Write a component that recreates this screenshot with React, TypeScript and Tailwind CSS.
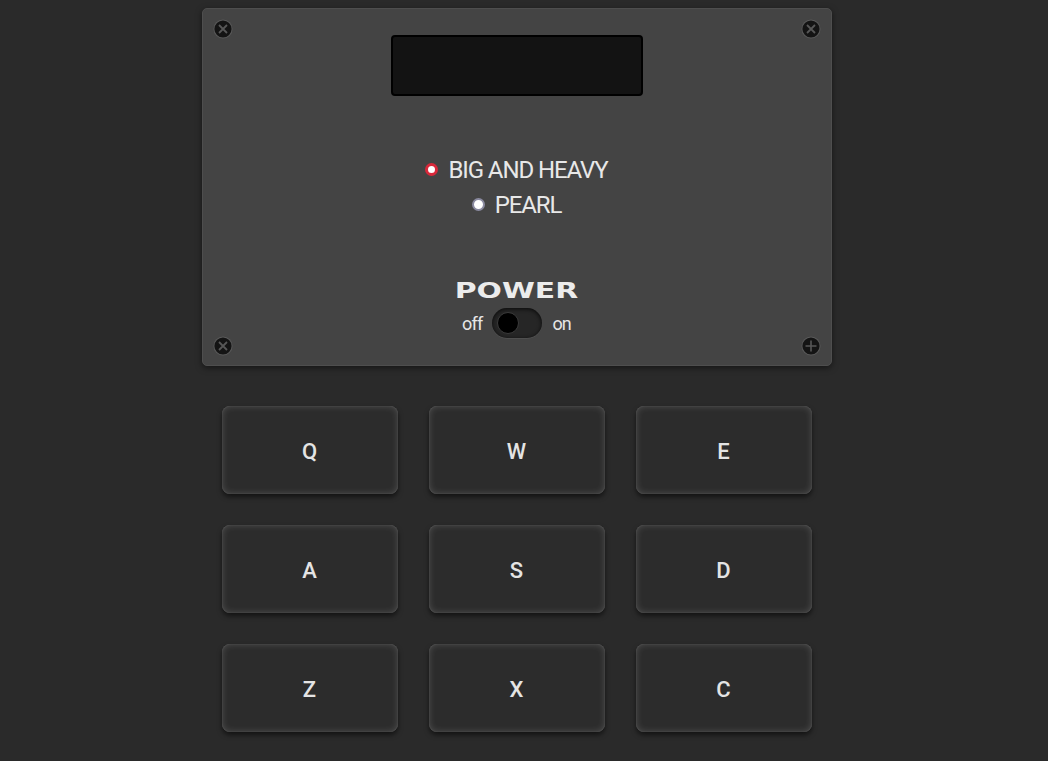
const keys = ["Q", "W", "E", "A", "S", "D", "Z", "X", "C"];

function Screw({ plus }: { plus?: boolean }) {
  return (
    <svg width="20" height="20" viewBox="0 0 20 20">
      <circle cx="10" cy="10" r="9.5" fill="#5a5a5a" />
      <circle cx="10" cy="10" r="8.6" fill="#141414" />
      {plus ? (
        <path d="M10 4.5V15.5M4.5 10H15.5" stroke="#575757" strokeWidth="1.6" />
      ) : (
        <path d="M6 6L14 14M14 6L6 14" stroke="#575757" strokeWidth="1.8" />
      )}
    </svg>
  );
}

function Radio({ label, active }: { label: string; active?: boolean }) {
  return (
    <div className="flex h-[35px] items-center justify-center gap-[10px]">
      {active ? (
        <span className="h-[13px] w-[13px] rounded-full border-[3px] border-[#d8283a] bg-white" />
      ) : (
        <span className="h-[13px] w-[13px] rounded-full border-2 border-[#8a8aa0] bg-white" />
      )}
      <span className="text-[24px] leading-none tracking-[-1.1px] text-[#e8e8e8]">{label}</span>
    </div>
  );
}

export default function App() {
  return (
    <div className="min-h-screen w-full bg-[#2a2a2a] font-['Roboto',sans-serif]">
      <div className="w-[1033px] pt-2">
        <div className="mx-auto flex w-[630px] flex-col items-center">
          <div className="relative flex h-[358px] w-[630px] flex-col items-center rounded-[5px] border border-[#4e4e4e] bg-[#444444] shadow-[0_2px_6px_rgba(0,0,0,0.5)]">
            <div className="absolute left-[10px] top-[10px]"><Screw /></div>
            <div className="absolute right-[10px] top-[10px]"><Screw /></div>
            <div className="absolute bottom-[9px] left-[10px]"><Screw /></div>
            <div className="absolute bottom-[9px] right-[10px]"><Screw plus /></div>

            <div className="mt-[26px] h-[61px] w-[252px] rounded-[4px] border-2 border-black bg-[#131313]" />

            <div className="mt-[56px] flex flex-col">
              <Radio label="BIG AND HEAVY" active />
              <Radio label="PEARL" />
            </div>

            <div className="mt-[59px] inline-block origin-center scale-x-[1.42] font-['DejaVu_Sans',sans-serif] text-[21px] font-bold leading-none text-[#ececec]">
              POWER
            </div>

            <div className="mt-[6px] flex items-center gap-[10px] text-[18px] tracking-[-0.8px] text-[#e6e6e6]">
              <span>off</span>
              <div className="flex h-[30px] w-[50px] items-center rounded-full bg-[#262626] pl-[5px] shadow-[inset_0_1px_4px_rgba(0,0,0,0.8),0_1px_0_rgba(255,255,255,0.06)]">
                <span className="h-[22px] w-[22px] rounded-full border border-[#3a3a3a] bg-black" />
              </div>
              <span>on</span>
            </div>
          </div>

          <div className="mt-[40px] grid w-[590px] grid-cols-3 gap-x-[31px] gap-y-[31px]">
            {keys.map((k) => (
              <div
                key={k}
                className="flex h-[88px] items-center justify-center rounded-[8px] bg-[#2c2c2c] pt-[2px] text-[22px] font-medium text-[#e4e4e4] shadow-[inset_0_0_7px_rgba(255,255,255,0.18),inset_0_0_1px_rgba(255,255,255,0.3),0_3px_5px_rgba(0,0,0,0.55)]"
              >
                {k}
              </div>
            ))}
          </div>
        </div>
      </div>
    </div>
  );
}
